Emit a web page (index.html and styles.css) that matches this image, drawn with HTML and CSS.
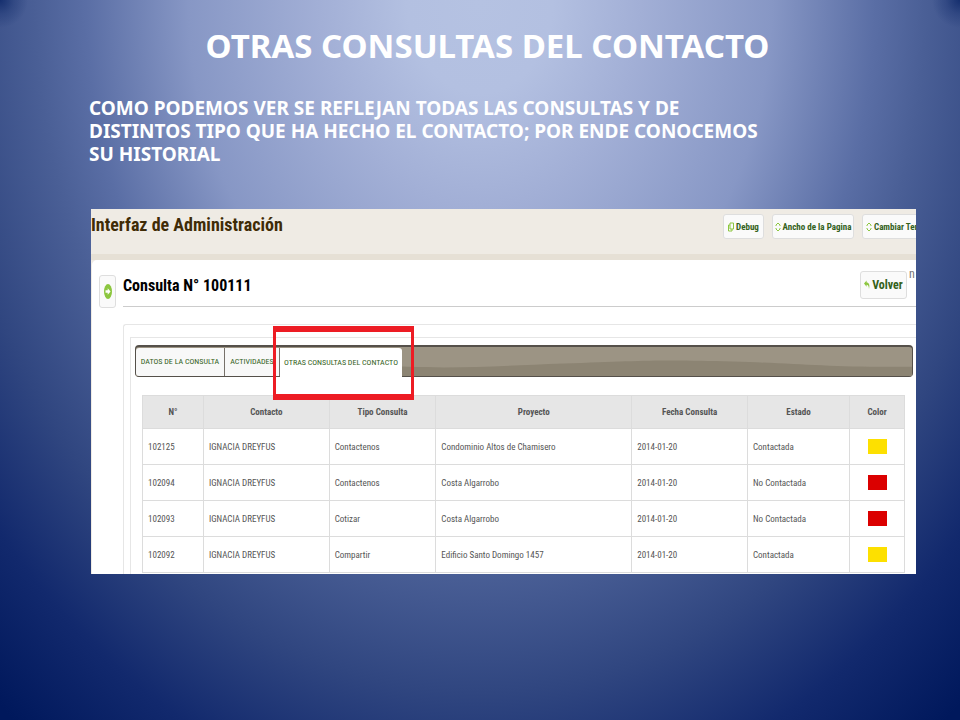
FILE: index.html
```html
<!DOCTYPE html>
<html lang="es">
<head>
<meta charset="utf-8">
<title>Otras consultas del contacto</title>
<link rel="stylesheet" href="styles.css">
</head>
<body>
<main class="slide">
  <h1 class="slide-title">OTRAS CONSULTAS DEL CONTACTO</h1>
  <p class="slide-text">COMO PODEMOS VER SE REFLEJAN TODAS LAS CONSULTAS Y DE<br>DISTINTOS TIPO QUE HA HECHO EL CONTACTO; POR ENDE CONOCEMOS<br>SU HISTORIAL</p>

  <section class="app">
    <header class="app-header">
      <div class="app-name">Interfaz de Administración</div>
      <nav class="toolbar">
        <button class="btn btn-debug" type="button"><svg class="icon" viewBox="0 0 6 10"><path d="M2 1h3.500v6H2zM2 3H.5v6H4V7"/></svg>Debug</button>
        <button class="btn btn-width" type="button"><svg class="icon" viewBox="0 0 6 10"><path d="M1 4V3l2-2 2 2v1M1 6v1l2 2 2-2V6"/></svg>Ancho de la Pagina</button>
        <button class="btn btn-theme" type="button"><svg class="icon" viewBox="0 0 6 10"><path d="M1 4V3l2-2 2 2v1M1 6v1l2 2 2-2V6"/></svg>Cambiar Tem</button>
      </nav>
    </header>

    <div class="sheet">
      <button class="btn btn-expand" type="button" aria-label="Expandir"><svg class="expand-icon" viewBox="0 0 8 15"><ellipse cx="4" cy="7.500" rx="4" ry="7.500"/><path d="M1.500 6.300h2.200V4.200L6.600 7.500l-2.900 3.300V8.700H1.500z"/></svg></button>
      <div class="content">
        <div class="heading">
          <h2 class="heading-text">Consulta N° 100111</h2>
          <button class="btn btn-back" type="button"><svg class="icon back-icon" viewBox="0 0 6 10"><path d="M0 3.400 2.600.4v2C5 2.400 6 4.600 5 9 4.800 6 4 4.800 2.600 4.800v1.900z"/></svg>Volver</button>
          <span class="more">n</span>
        </div>
        <div class="frame">
          <div class="inner">
            <div class="tabs">
              <svg class="wave" viewBox="0 0 780 28" preserveAspectRatio="none"><path d="M0 14C90 12 150 12 230 17S350 19 430 16 530 12 600 14 700 20 780 19V28H0z"/></svg>
              <a class="tab tab-data" href="#datos">DATOS DE LA CONSULTA</a>
              <a class="tab tab-activity" href="#actividades">ACTIVIDADES</a>
              <a class="tab tab-active" href="#otras">OTRAS CONSULTAS DEL CONTACTO<span class="marker"></span></a>
            </div>
            <table class="grid">
              <colgroup><col class="c-id"><col class="c-contact"><col class="c-type"><col class="c-project"><col class="c-date"><col class="c-state"><col class="c-color"></colgroup>
              <thead><tr><th>N°</th><th>Contacto</th><th>Tipo Consulta</th><th>Proyecto</th><th>Fecha Consulta</th><th>Estado</th><th>Color</th></tr></thead>
              <tbody>
                <tr><td>102125</td><td>IGNACIA DREYFUS</td><td>Contactenos</td><td>Condominio Altos de Chamisero</td><td>2014-01-20</td><td>Contactada</td><td><span class="swatch yellow"></span></td></tr>
                <tr><td>102094</td><td>IGNACIA DREYFUS</td><td>Contactenos</td><td>Costa Algarrobo</td><td>2014-01-20</td><td>No Contactada</td><td><span class="swatch red"></span></td></tr>
                <tr><td>102093</td><td>IGNACIA DREYFUS</td><td>Cotizar</td><td>Costa Algarrobo</td><td>2014-01-20</td><td>No Contactada</td><td><span class="swatch red"></span></td></tr>
                <tr><td>102092</td><td>IGNACIA DREYFUS</td><td>Compartir</td><td>Edificio Santo Domingo 1457</td><td>2014-01-20</td><td>Contactada</td><td><span class="swatch yellow"></span></td></tr>
              </tbody>
            </table>
          </div>
        </div>
      </div>
    </div>
  </section>
</main>
</body>
</html>
```
FILE: styles.css
```css
* { box-sizing: border-box; }

body {
  margin: 0;
  min-height: 100vh;
  background:
    radial-gradient(circle 28px at 0 0, #0a2566cc 0%, #0a256650 50%, #0a256600 100%),
    radial-gradient(circle 28px at 100% 0, #0a2566cc 0%, #0a256650 50%, #0a256600 100%),
    radial-gradient(ellipse 76% 130% at 50% 0, #b5c2e2 0%, #b3c0e1 10%, #a2afd6 22%, #8797c5 40%, #5a6ea5 54%, #4a5f96 61%, #304680 74%, #12296d 87%, #00185c 100%);
  font-family: "Roboto Condensed", Roboto, sans-serif;
}

.slide { padding: 24px 44px 0 91px; }

.slide-title {
  margin: 0;
  padding-right: 32px;
  color: #fff;
  font: bold 33px/44px "Noto Sans", sans-serif;
  text-align: center;
}

.slide-text {
  margin: 29px 0 43px -2px;
  color: #fff;
  font: bold 19px/23px "Noto Sans", sans-serif;
}

.app { overflow: hidden; background: #efebe4; }

.app-header {
  display: flex;
  justify-content: space-between;
  align-items: flex-start;
  height: 51px;
  border-bottom: 6px solid #e6e0d5;
}

.app-name {
  color: #3f2b06;
  font-size: 18px;
  font-weight: bold;
  line-height: 32px;
  white-space: nowrap;
}

.toolbar { display: flex; gap: 8px; margin: 5px -4px 0 0; }

.btn {
  display: flex;
  flex: none;
  align-items: center;
  justify-content: center;
  gap: 2px;
  padding: 0;
  border: 1px solid #dedede;
  border-radius: 3px;
  background: #fafafa;
  color: #33611a;
  font: bold 9px/12px "Roboto Condensed", Roboto, sans-serif;
  white-space: nowrap;
}

.toolbar .btn { height: 25px; }
.btn-debug { width: 41px; }
.btn-width { width: 82px; }
.toolbar .btn-theme { width: 58px; justify-content: flex-start; padding-left: 3px; }

.icon { flex: none; width: 6px; height: 10px; fill: none; stroke: #8cc63f; stroke-width: 1; }
.back-icon { fill: #8cc63f; stroke: none; }

.sheet {
  display: flex;
  gap: 7px;
  margin-left: 1px;
  padding-left: 7px;
  border-top-left-radius: 5px;
  background: #fff;
}

.btn-expand { width: 17px; height: 33px; margin-top: 15px; }
.expand-icon { width: 8px; height: 15px; fill: #8cc63f; }
.expand-icon path { fill: #fff; }

.content { flex: 1; min-width: 0; }

.heading {
  display: flex;
  align-items: flex-start;
  gap: 2px;
  height: 47px;
  border-bottom: 1px solid #ccc;
}

.heading-text {
  flex: 1;
  margin: 12px 0 0;
  color: #000;
  font-size: 16px;
  line-height: 28px;
  white-space: nowrap;
}

.btn-back { width: 47px; height: 28px; margin-top: 11px; font-size: 12px; }
.more { width: 7px; margin-top: 6px; color: #777; font-size: 12px; line-height: 16px; }

.frame {
  margin-top: 17px;
  padding: 12px 0 0 6px;
  border: solid #e6e6e6;
  border-width: 1px 0 0 1px;
  border-top-left-radius: 3px;
}

.inner {
  padding: 7px 3px 1px 4px;
  border: solid #e6e6e6;
  border-width: 1px 0 0 1px;
}

.tabs {
  position: relative;
  display: flex;
  height: 32px;
  border: 1px solid #55504a;
  border-top-width: 2px;
  border-radius: 4px;
  background: #9c9484;
}

.wave { position: absolute; inset: 0; width: 100%; height: 100%; fill: #8c8473; }

.tab {
  position: relative;
  display: flex;
  align-items: center;
  justify-content: center;
  margin-top: 1px;
  border-right: 1px solid #77716a;
  background: #f8f8f8;
  color: #33611a;
  font-size: 8px;
  line-height: 12px;
  text-decoration: none;
  white-space: nowrap;
}

.tab-data { width: 89px; border-radius: 3px 0 0 3px; }
.tab-activity { width: 55px; }
.tab-active { height: 30px; width: 122px; border: 0; border-radius: 0 3px 0 0; background: #fff; }

.marker {
  position: absolute;
  z-index: 1;
  inset: -22px -12px -22px -7px;
  border: solid #ed1c24;
  border-width: 6px 3px;
}

.grid {
  width: calc(100% - 15px);
  margin: 18px 0 0 7px;
  border-collapse: collapse;
  table-layout: fixed;
  color: #555;
  font-size: 9px;
  line-height: 12px;
}

.c-id { width: 8%; }
.c-contact { width: 16.5%; }
.c-type { width: 14%; }
.c-project { width: 25.7%; }
.c-date { width: 15.2%; }
.c-state { width: 13.4%; }
.c-color { width: 7.2%; }

.grid th, .grid td { border: 1px solid #dcdcdc; white-space: nowrap; }
.grid th { height: 33px; padding: 0; background: #e6e6e6; font-weight: bold; }
.grid td { height: 36px; padding: 0 5px; }

.swatch { display: block; width: 19px; height: 15px; margin: 0 auto; }
.yellow { background: #fde000; }
.red { background: #db0000; }
```
